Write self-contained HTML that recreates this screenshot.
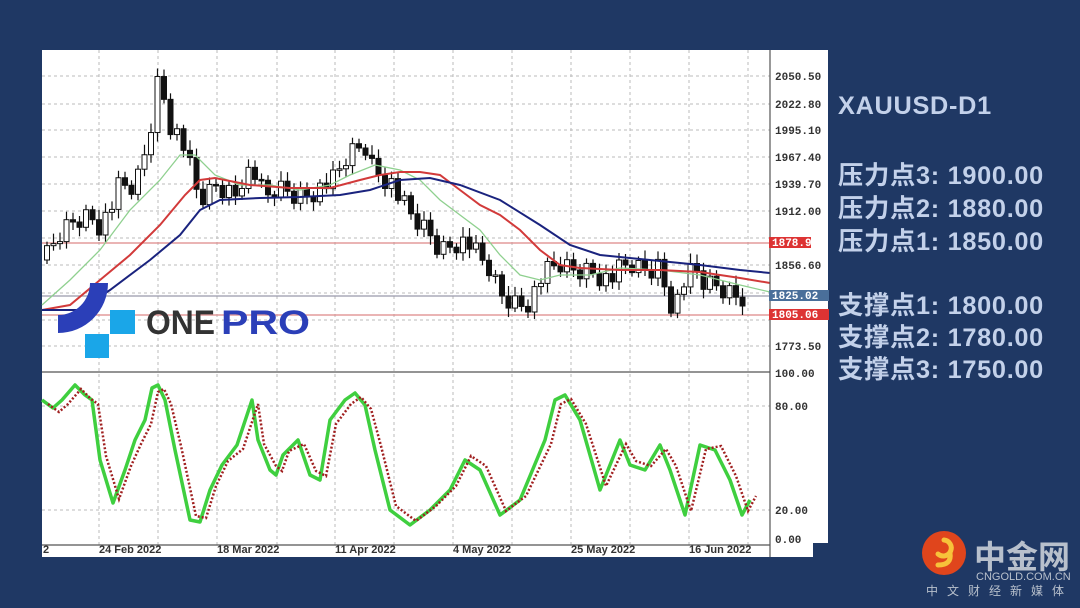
<!DOCTYPE html>
<html><head><meta charset="utf-8"><style>
html,body{margin:0;padding:0;background:#1f3864;width:1080px;height:608px;overflow:hidden;font-family:"Liberation Sans","Noto Sans CJK SC",sans-serif}
.t{position:absolute;left:838px;color:#c3d1ea;font-weight:bold;font-size:25.3px;letter-spacing:0.7px;white-space:nowrap}
</style></head><body>
<svg id="s" width="1080" height="608" style="position:absolute;left:0;top:0">
<rect x="42" y="50" width="786" height="507" fill="#fff"/>
<rect x="813" y="543" width="20" height="20" fill="#1f3864"/>
<g id="grid" stroke="#bbb" stroke-dasharray="3,3" stroke-width="1"></g>
<line x1="42" y1="243" x2="770" y2="243" stroke="#d88" stroke-width="1.2"/>
<line x1="42" y1="296" x2="770" y2="296" stroke="#99a" stroke-width="1.2"/>
<line x1="42" y1="315" x2="770" y2="315" stroke="#d88" stroke-width="1.2"/>
<g id="c"></g>
<polyline fill="none" stroke="#8fd08f" stroke-width="1.3" points="42,305 70,280 100,250 130,210 160,180 180,155 195,155 215,175 240,185 270,185 300,190 330,185 350,175 375,165 400,170 420,180 440,200 460,215 480,230 500,255 520,275 540,280 560,275 590,275 620,268 660,270 700,275 740,285 770,292"/>
<polyline fill="none" stroke="#d23a3a" stroke-width="2" points="42,310 70,305 100,280 130,255 160,225 185,195 200,180 215,178 250,185 290,188 330,188 360,180 380,175 400,172 420,172 440,175 460,190 480,205 500,215 520,230 540,250 560,265 580,268 620,270 660,270 700,272 740,278 770,283"/>
<polyline fill="none" stroke="#1a237e" stroke-width="2" points="42,310 80,310 110,290 150,260 180,235 200,210 220,200 260,198 300,197 340,195 370,190 400,180 430,178 460,185 500,200 540,225 570,245 600,255 650,260 700,265 740,270 770,273"/>
<line x1="42" y1="372" x2="770" y2="372" stroke="#555" stroke-width="1.2"/>
<line x1="42" y1="545" x2="770" y2="545" stroke="#555" stroke-width="1.2"/>
<line x1="770" y1="50" x2="770" y2="557" stroke="#555" stroke-width="1.2"/>
<polyline id="g" fill="none" stroke="#3fcf3f" stroke-width="3.5" stroke-linejoin="round"/>
<polyline id="r" fill="none" stroke="#a02020" stroke-width="2.5" stroke-dasharray="2,2"/>
<g font-family="Liberation Mono,monospace" font-size="11" font-weight="bold" fill="#333" id="ax"></g>
<rect x="769" y="237" width="42" height="11" fill="#d33"/><text x="772" y="246" font-family="Liberation Mono" font-size="11" font-weight="bold" fill="#fff">1878.91</text>
<rect x="769" y="290" width="60" height="11" fill="#4a6f9a"/><text x="772" y="299" font-family="Liberation Mono" font-size="11" font-weight="bold" fill="#fff">1825.02</text>
<rect x="769" y="309" width="60" height="11" fill="#d33"/><text x="772" y="318" font-family="Liberation Mono" font-size="11" font-weight="bold" fill="#fff">1805.06</text>
<g font-size="11" font-weight="bold" fill="#333">
<text x="43" y="553">2</text><text x="99" y="553">24 Feb 2022</text><text x="217" y="553">18 Mar 2022</text><text x="335" y="553">11 Apr 2022</text><text x="453" y="553">4 May 2022</text><text x="571" y="553">25 May 2022</text><text x="689" y="553">16 Jun 2022</text>
</g>
<path d="M90,283 L108,283 A50,50 0 0 1 58,333 L58,315 A32,32 0 0 0 90,283 Z" fill="#2b3fb8"/>
<rect x="110" y="310" width="25" height="24" fill="#1aa6e8"/>
<rect x="85" y="334" width="24" height="24" fill="#1aa6e8"/>
<text x="146" y="334" font-size="34" font-weight="bold" fill="#333" textLength="69" lengthAdjust="spacingAndGlyphs">ONE</text>
<text x="221" y="334" font-size="34" font-weight="bold" fill="#2b3fb8" textLength="89" lengthAdjust="spacingAndGlyphs">PRO</text>
<circle cx="944" cy="553" r="22" fill="#e0451c"/>
<path d="M944,540 a8,8 0 1 1 -6,14 M950,553 q2,12 -12,12" fill="none" stroke="#f7c23a" stroke-width="5" stroke-linecap="round"/>
<text x="974" y="568" font-size="32" font-weight="bold" fill="#b8c0cc" font-family="Noto Sans CJK SC,sans-serif">中金网</text>
<text x="976" y="580" font-size="11" fill="#b8c0cc">CNGOLD.COM.CN</text>
<text x="926" y="595" font-size="12" fill="#b8c0cc" letter-spacing="9" font-family="Noto Sans CJK SC,sans-serif">中文财经新媒体</text>
</svg>
<div class="t" style="top:92px">XAUUSD-D1</div>
<div class="t" style="top:156px">压力点3: 1900.00</div>
<div class="t" style="top:189px">压力点2: 1880.00</div>
<div class="t" style="top:222px">压力点1: 1850.00</div>
<div class="t" style="top:286px">支撑点1: 1800.00</div>
<div class="t" style="top:318px">支撑点2: 1780.00</div>
<div class="t" style="top:350px">支撑点3: 1750.00</div>
<script>
(function(){
var NS="http://www.w3.org/2000/svg";
function el(p,t,a){var e=document.createElementNS(NS,t);for(var k in a)e.setAttribute(k,a[k]);p.appendChild(e);return e;}
var grid=document.getElementById('grid');
[99,158,217,277,335,394,453,512,571,630,689,748].forEach(function(x){el(grid,'line',{x1:x,y1:50,x2:x,y2:545});});
var hy=[76,104,130,157,184,211,238,265,293,320,346,406,510];
hy.forEach(function(y){el(grid,'line',{x1:42,y1:y,x2:770,y2:y});});
var ax=document.getElementById('ax');
var lab=["2050.50","2022.80","1995.10","1967.40","1939.70","1912.00","1884.30","1856.60","1828.90","1801.20","1773.50"];
lab.forEach(function(l,i){if(i==6||i==8||i==9)return;var t=el(ax,'text',{x:775,y:hy[i]+4});t.textContent=l;});
[["100.00",377],["80.00",410],["20.00",514],["0.00",543]].forEach(function(a){var t=el(ax,'text',{x:775,y:a[1]});t.textContent=a[0];});
var kp=[[45,260],[60,235],[75,220],[90,215],[100,225],[110,210],[120,185],[130,190],[140,175],[150,130],[158,80],[165,100],[172,130],[180,135],[188,160],[195,190],[205,200],[215,185],[225,190],[235,195],[245,170],[255,175],[265,200],[275,190],[285,190],[295,195],[305,195],[315,190],[325,185],[335,180],[345,160],[355,150],[365,145],[372,165],[380,175],[390,180],[400,200],[410,215],[420,225],[430,235],[440,250],[450,245],[460,240],[470,245],[480,260],[490,270],[500,295],[510,300],[520,305],[530,300],[540,280],[550,270],[560,265],[570,270],[580,270],[590,270],[600,275],[610,280],[620,270],[630,265],[640,270],[650,270],[660,265],[668,300],[675,305],[685,280],[695,270],[705,285],[715,285],[725,290],[735,295],[745,295]];
function ip(x){for(var i=1;i<kp.length;i++){if(x<=kp[i][0]){var a=kp[i-1],b=kp[i];return a[1]+(b[1]-a[1])*(x-a[0])/(b[0]-a[0]);}}return kp[kp.length-1][1];}
var c=document.getElementById('c');var prev=ip(45);
for(var x=47,i=0;x<=745;x+=6.5,i++){
 var j=((i*37)%11-5)*2.2;var cl=ip(x)+j;var op=prev;var tp=Math.min(op,cl),bt=Math.max(op,cl);if(bt-tp<1.5)bt=tp+1.5;
 el(c,'line',{x1:x,y1:tp-4-(i*13%7),x2:x,y2:bt+4+(i*7%6),stroke:'#111','stroke-width':1.2});
 el(c,'rect',{x:x-2.5,y:tp,width:5,height:bt-tp,fill:cl>op?'#111':'#fff',stroke:'#111','stroke-width':1});
 prev=cl;}
var gp="42,400 53,408 62,400 75,385 85,395 92,400 100,460 113,503 125,470 135,440 145,420 152,388 158,385 165,400 175,450 190,520 200,522 210,490 222,465 237,445 252,400 258,440 270,470 276,475 283,455 298,440 310,475 320,480 330,420 345,400 355,393 365,405 375,450 390,510 410,525 430,510 450,490 465,460 480,470 500,515 520,500 545,440 555,400 565,395 580,420 600,490 620,440 630,465 645,470 660,445 670,470 685,515 700,445 715,450 730,480 742,515 750,500";
document.getElementById('g').setAttribute('points',gp);
document.getElementById('r').setAttribute('points',gp.split(' ').map(function(p){var a=p.split(',');return (+a[0]+6)+','+(+a[1]+(+a[1]<450?4:-4));}).join(' '));
})();
</script>
</body></html>
